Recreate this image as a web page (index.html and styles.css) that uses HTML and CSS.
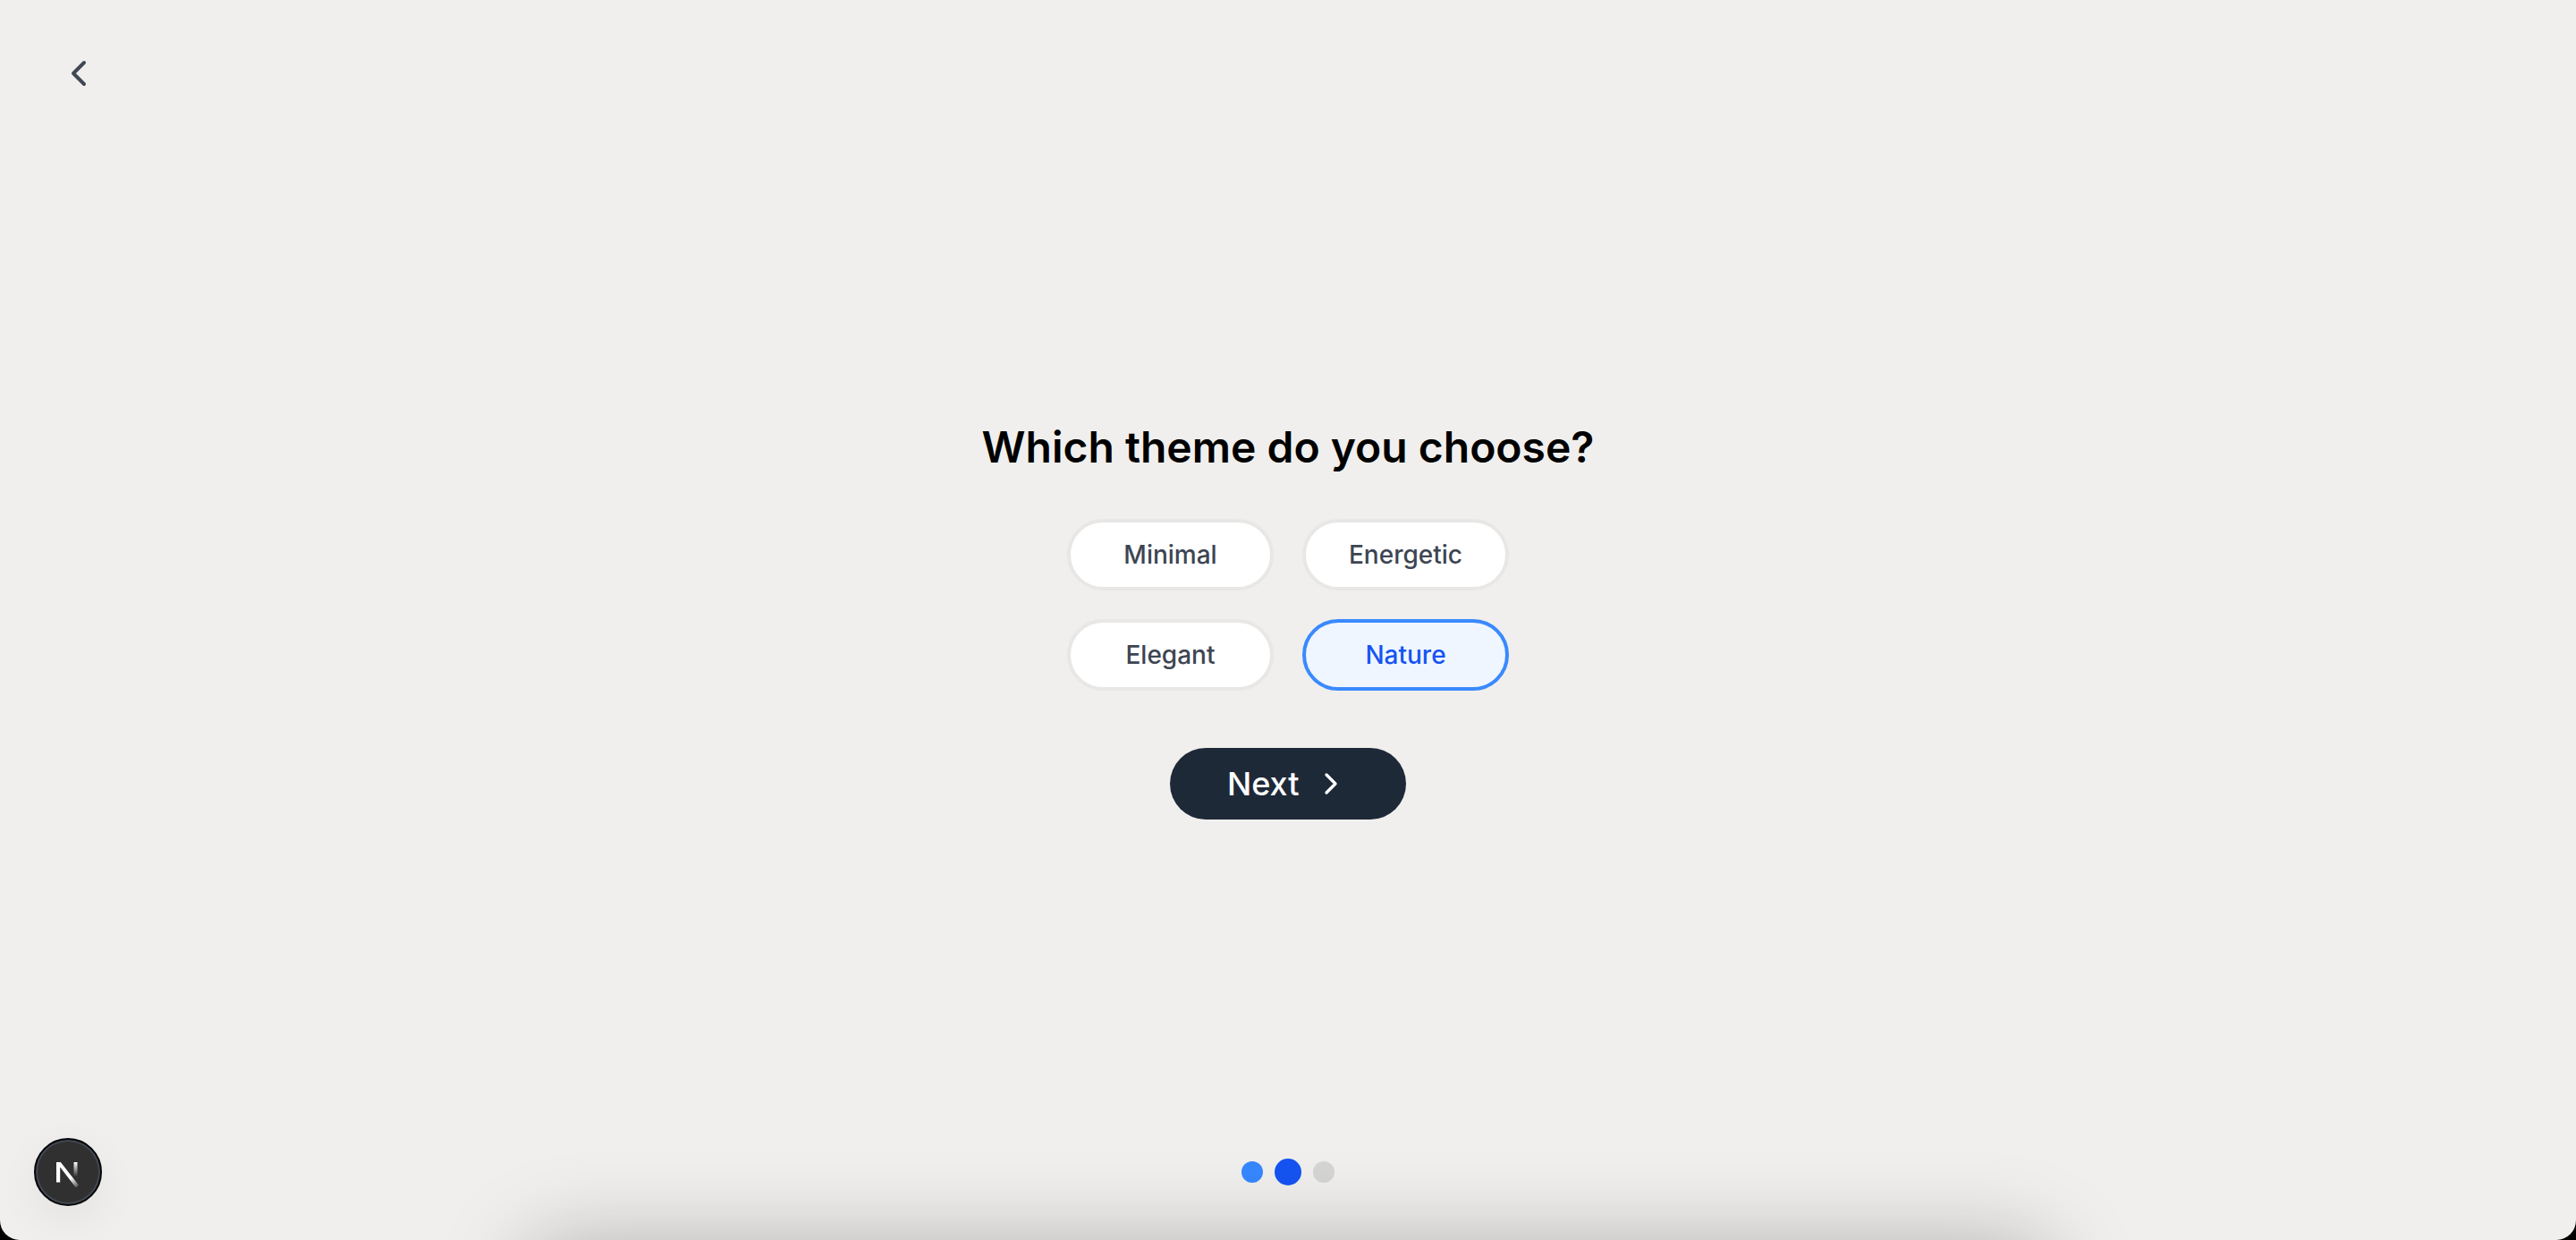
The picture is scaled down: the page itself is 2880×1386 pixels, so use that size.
FILE: index.html
```html
<!DOCTYPE html>
<html lang="en">
<head>
<meta charset="utf-8">
<title>Choose a theme</title>
<link rel="stylesheet" href="styles.css">
</head>
<body>
<div class="page">
  <header class="topbar">
    <button class="back" aria-label="Back">
      <svg viewBox="0 0 24 24"><path d="M15 18l-6-6 6-6"/></svg>
    </button>
  </header>
  <main class="content">
    <h1 class="title">Which theme do you choose?</h1>
    <div class="options">
      <button class="option">Minimal</button>
      <button class="option">Energetic</button>
      <button class="option">Elegant</button>
      <button class="option selected">Nature</button>
    </div>
    <button class="next">Next
      <svg viewBox="0 0 24 24"><path d="M9 18l6-6-6-6"/></svg>
    </button>
  </main>
  <footer class="steps">
    <span class="dot done"></span>
    <span class="dot current"></span>
    <span class="dot"></span>
  </footer>
  <div class="dock-shadow"></div>
  <div class="dev-badge">
    <svg viewBox="0 0 76 76">
      <defs>
        <linearGradient id="diagonal" gradientUnits="userSpaceOnUse" x1="41" y1="45" x2="49" y2="56">
          <stop offset="0" stop-color="#fff"/><stop offset="1" stop-color="#fff" stop-opacity="0.1"/>
        </linearGradient>
        <linearGradient id="stem" x1="0" y1="0" x2="0" y2="1">
          <stop offset="0" stop-color="#fff"/><stop offset="1" stop-color="#fff" stop-opacity="0.05"/>
        </linearGradient>
      </defs>
      <path d="M25 49.500V27h4.800L50 52.800l-3.200 2.600L29.200 32.500v17z" fill="url(#diagonal)"/>
      <rect x="44.500" y="27" width="4" height="15.500" fill="url(#stem)"/>
    </svg>
  </div>
</div>
</body>
</html>
```
FILE: styles.css
```css
* { box-sizing: border-box; }
html { background: #000; }
body { margin: 0; font-family: Inter, "Liberation Sans", sans-serif; }
button { border: 0; font-family: inherit; padding: 0; }
svg { display: block; fill: none; stroke-linecap: round; stroke-linejoin: round; }
.page {
  position: relative;
  display: flex;
  flex-direction: column;
  height: 1386px;
  overflow: hidden;
  border-radius: 0 0 22px 22px;
  background: #f0efed;
}
.topbar { height: 164px; padding: 58px 64px; }
.back { display: block; width: 48px; height: 48px; background: none; }
.back svg { width: 48px; height: 48px; stroke: #404854; stroke-width: 2; }
.content {
  flex: 1;
  display: flex;
  flex-direction: column;
  align-items: center;
  padding-top: 304px;
}
.title { margin: 0; font-size: 48px; line-height: 64px; font-weight: 600; color: #000; }
.options {
  display: grid;
  grid-template-columns: 231px 231px;
  gap: 32px;
  margin-top: 48px;
}
.option {
  height: 80px;
  border: 4px solid #e8e7e5;
  border-radius: 40px;
  background: #fff;
  color: #3d4552;
  font-size: 28px;
  font-weight: 500;
}
.option.selected { border-color: #3a89ff; background: #eff6ff; color: #1654f2; }
.next {
  display: flex;
  align-items: center;
  justify-content: space-between;
  width: 264px;
  height: 80px;
  margin-top: 64px;
  padding: 0 64px;
  border-radius: 40px;
  background: #1e2938;
  color: #fff;
  font-size: 36px;
  font-weight: 500;
}
.next svg { width: 40px; height: 40px; stroke: #fff; stroke-width: 2; }
.steps {
  display: flex;
  justify-content: center;
  align-items: center;
  gap: 16px;
  height: 152px;
}
.dot { width: 24px; height: 24px; border-radius: 50%; background: #d5d5d4; }
.dot.done { background: #3687ff; }
.dot.current { width: 30px; height: 30px; margin: 0 -3px; background: #1654f2; }
.dock-shadow {
  position: absolute;
  left: 584px;
  right: 584px;
  top: 1387px;
  height: 200px;
  border-radius: 50px;
  box-shadow: 0 0 96px rgba(0, 0, 0, .25);
}
.dev-badge {
  position: absolute;
  left: 38px;
  top: 1272px;
  width: 76px;
  height: 76px;
  border: 2px solid #050608;
  border-radius: 50%;
  background: #303030;
  box-shadow: inset 0 0 0 2px #424854, 0 16px 50px rgba(0, 0, 0, .06);
}
.dev-badge svg { width: 76px; height: 76px; margin: -2px; }
```
